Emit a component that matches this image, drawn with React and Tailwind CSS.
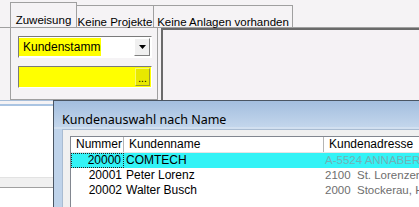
import React from 'react';

const rows = [
  { nr: '20000', name: 'COMTECH', addr: 'A-5524 ANNABERG, Hauptstraße 1', selected: true },
  { nr: '20001', name: 'Peter Lorenz', addr: '2100  St. Lorenzen, Dorfplatz 4' },
  { nr: '20002', name: 'Walter Busch', addr: '2000  Stockerau, Hauptplatz 9' },
];

const Tab = ({ label, active, w }) => (
  <div
    className={`${w} shrink-0 text-center border border-b-0 border-[#a0a0a0] bg-[#f5f3f5] -mr-px ${
      active ? 'h-[25px] mt-0 pt-[4px] relative z-10' : 'h-[22px] mt-[3px] pt-[3px]'
    }`}
  >
    <span className="text-[11.5px] leading-[15px] text-black">{label}</span>
  </div>
);

export default function App() {
  return (
    <div
      className="relative w-[419px] h-[207px] overflow-hidden bg-[#f5f3f5]"
      style={{ fontFamily: '"Liberation Sans", Arial, sans-serif' }}
    >
      {/* Tabs */}
      <div className="flex pl-[10px] pt-[2px] h-[27px]">
        <Tab label="Zuweisung" active w="w-[67px]" />
        <Tab label="Keine Projekte" w="w-[78px]" />
        <Tab label="Keine Anlagen vorhanden" w="w-[140px]" />
      </div>

      {/* Tab page */}
      <div className="flex h-[73px] border-t border-[#a0a0a0] bg-[#f5f3f5]">
        <div className="ml-[10px] w-[148px] h-[72px] border-x border-b border-[#a0a0a0] flex flex-col gap-[8px] pt-[8px] pl-[7px]">
          {/* combo */}
          <div className="w-[134px] h-[22px] border border-[#7a7a7a] border-r-white border-b-white bg-white flex items-stretch">
            <div className="flex-1 flex items-center">
              <span className="bg-[#ffff00] h-[18px] pl-[4px] w-[82px] text-[12px] leading-[18px] text-black">Kundenstamm</span>
            </div>
            <div className="w-[16px] mr-[1px] my-[1px] bg-[#f0f0f0] border border-white border-r-[#808080] border-b-[#808080] flex items-center justify-center">
              <svg width="7" height="4" viewBox="0 0 7 4"><path d="M0 0h7L3.5 4z" fill="#000" /></svg>
            </div>
          </div>
          {/* lookup */}
          <div className="w-[134px] h-[22px] border border-[#7a7a7a] border-r-white border-b-white bg-[#ffff00] flex items-stretch justify-end">
            <div className="w-[15px] mr-[1px] my-[1px] bg-[#e8e800] border border-[#f8f870] border-r-[#9a9a30] border-b-[#9a9a30] flex items-end justify-center">
              <span className="text-[10px] leading-[12px] text-black">...</span>
            </div>
          </div>
        </div>
        <div className="ml-[3px] flex-1 h-[72px] border-l-2 border-t-2 border-[#6a6a6a] bg-[#f5f2f5]" />
      </div>

      {/* Background below */}
      <div className="h-[4px] bg-[#f5f3f5] border-t border-[#a8bed8]" />
      <div className="h-[73px] bg-white border-t-2 border-[#aac4e2]" />
      <div className="h-[10px] bg-[#f0f0f0] border-t border-[#e2e2e2]" />
      <div className="h-[20px] bg-white border-t border-[#a0a0a0]" />

      {/* Dialog */}
      <div className="absolute left-[53px] top-[100px] w-[380px] h-[120px] border-l border-t border-[#4a5563] bg-[#bfd3ea] pl-[8px]">
        <div className="-ml-[8px] h-[26px] bg-gradient-to-b from-[#a3bedf] to-[#c3d6ec] pl-[8px] pt-[6px]">
          <span
            className="text-[12.5px] leading-[16px] text-black"
            style={{ fontFamily: '"Noto Sans", "Open Sans", sans-serif' }}
          >
            Kundenauswahl nach Name
          </span>
        </div>
        <div className="h-[2px] -ml-[8px] bg-[#d2e0f0]" />
        <div className="bg-[#f0f0f0] h-full pt-[6px] pl-[7px] border-l border-t border-[#a9bcd2]">
          <div className="border-l border-t border-[#828790] bg-white h-full">
            {/* header */}
            <div className="flex h-[16px] text-[12px] leading-[15px] text-black border-b border-[#e5e5e5]">
              <div className="w-[53px] shrink-0 border-r border-[#b5b5b5] pl-[5px]">Nummer</div>
              <div className="w-[200px] shrink-0 border-r border-[#b5b5b5] pl-[5px]">Kundenname</div>
              <div className="flex-1 pl-[5px] whitespace-nowrap">Kundenadresse</div>
            </div>
            {rows.map((r) => (
              <div
                key={r.nr}
                className={`flex h-[15px] text-[12px] leading-[15px] overflow-hidden ${r.selected ? 'bg-[#33f3f6]' : ''}`}
              >
                <div
                  className={`w-[53px] shrink-0 text-right pr-[2px] text-black ${
                    r.selected ? 'border border-dotted border-[#222] leading-[13px]' : ''
                  }`}
                >
                  {r.nr}
                </div>
                <div className="w-[200px] shrink-0 pl-[2px] text-black">{r.name}</div>
                <div className={`min-w-0 flex-1 pl-[1px] text-[11.5px] whitespace-pre overflow-hidden ${r.selected ? 'text-[#6fb2b8]' : 'text-[#6e6e6e]'}`}>
                  {r.addr}
                </div>
              </div>
            ))}
          </div>
        </div>
      </div>
    </div>
  );
}
